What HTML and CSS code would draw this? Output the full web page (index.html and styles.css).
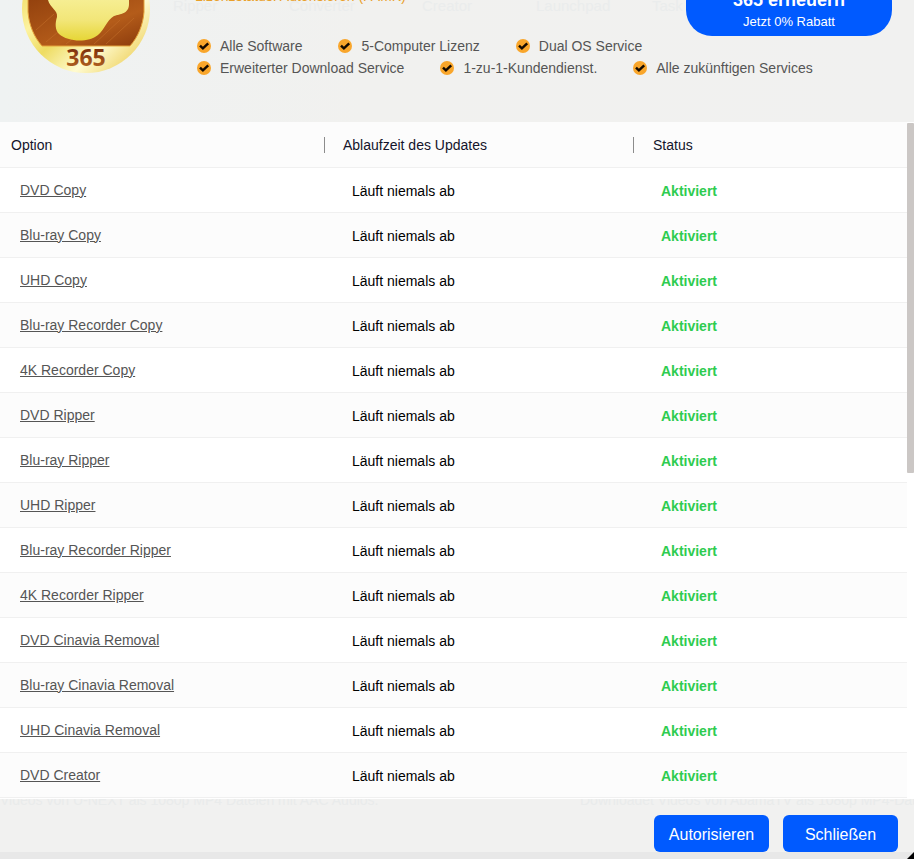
FILE: index.html
```html
<!DOCTYPE html>
<html lang="de">
<head>
  <meta charset="UTF-8">
  <title>Lizenzstatus</title>
  <link rel="stylesheet" href="styles.css">
</head>
<body>

<svg class="sprite" width="0" height="0" aria-hidden="true">
  <symbol id="check" viewBox="0 0 14 14">
    <circle cx="7" cy="7" r="7" fill="#f9a62b"/>
    <path d="M3 6.6 5.9 9.3 11.2 4.4" fill="none" stroke="#140a00" stroke-width="2.5"/>
  </symbol>
</svg>

<header class="license">
  <div class="ghost-nav" aria-hidden="true">
    <span class="g1">Ripper</span>
    <span class="g2">Converter</span>
    <span class="g3">Creator</span>
    <span class="g4">Launchpad</span>
    <span class="g5">Task</span>
  </div>

  <svg class="medal" viewBox="0 0 128 74" role="img" aria-label="365">
    <defs>
      <linearGradient id="rim" x1="0" y1="0" x2="1" y2="1">
        <stop offset="0" stop-color="#e3c62f"/>
        <stop offset=".35" stop-color="#fdf3a0"/>
        <stop offset=".5" stop-color="#eedc62"/>
        <stop offset=".7" stop-color="#fffbd0"/>
        <stop offset="1" stop-color="#e6bf2e"/>
      </linearGradient>
      <linearGradient id="brown" x1="0" y1="0" x2="1" y2="1">
        <stop offset="0" stop-color="#94420e"/>
        <stop offset=".6" stop-color="#b45c1a"/>
        <stop offset="1" stop-color="#8a3a0c"/>
      </linearGradient>
      <linearGradient id="gold" x1="0" y1="0" x2="0" y2="1">
        <stop offset="0" stop-color="#f6ee92"/>
        <stop offset=".5" stop-color="#f2e678"/>
        <stop offset="1" stop-color="#e6d636"/>
      </linearGradient>
      <linearGradient id="digits" x1="0" y1="0" x2="0" y2="1">
        <stop offset="0.2" stop-color="#7a2c0a"/>
        <stop offset="1" stop-color="#c07026"/>
      </linearGradient>
    </defs>
    <circle cx="64" cy="9" r="64" fill="url(#rim)"/>
    <path d="M6 0V12C7 25 12 37 20 46H108C116 37 121 25 122 12V0Z" fill="url(#brown)"/>
    <path d="M6 0V12C7 25 12 37 20 46H108C116 37 121 25 122 12V0" fill="none" stroke="#e5a33a" stroke-width="1"/>
    <path d="M44 44 60 31M72 44 98 20M84 44 112 18M14 30 32 14M24 42 36 32" stroke="#c46f2a" stroke-width="1" opacity=".6"/>
    <path d="M26 0C28 8 36 10 35 17C33 23 33 30 37 34C46 42 66 43 76 35C83 29 84 21 92 16C98 14 107 14 107 4V0Z" fill="url(#gold)"/>
    <text class="medal-text" x="64" y="66" fill="url(#digits)">365</text>
  </svg>

  <div class="details">
    <p class="state">Lizenzstatus: Autorisieren (FAMK)</p>
    <ul class="features">
      <li><svg class="check"><use href="#check"/></svg>Alle Software</li>
      <li><svg class="check"><use href="#check"/></svg>5-Computer Lizenz</li>
      <li><svg class="check"><use href="#check"/></svg>Dual OS Service</li>
    </ul>
    <ul class="features">
      <li><svg class="check"><use href="#check"/></svg>Erweiterter Download Service</li>
      <li><svg class="check"><use href="#check"/></svg>1-zu-1-Kundendienst.</li>
      <li><svg class="check"><use href="#check"/></svg>Alle zukünftigen Services</li>
    </ul>
  </div>

  <button class="renew" type="button"><strong>365 erneuern</strong><span>Jetzt 0% Rabatt</span></button>
</header>

<main class="list">
  <table class="options">
    <thead>
      <tr><th>Option</th><th>Ablaufzeit des Updates</th><th>Status</th></tr>
    </thead>
    <tbody>
      <tr><td><a href="#">DVD Copy</a></td><td>Läuft niemals ab</td><td class="active">Aktiviert</td></tr>
      <tr><td><a href="#">Blu-ray Copy</a></td><td>Läuft niemals ab</td><td class="active">Aktiviert</td></tr>
      <tr><td><a href="#">UHD Copy</a></td><td>Läuft niemals ab</td><td class="active">Aktiviert</td></tr>
      <tr><td><a href="#">Blu-ray Recorder Copy</a></td><td>Läuft niemals ab</td><td class="active">Aktiviert</td></tr>
      <tr><td><a href="#">4K Recorder Copy</a></td><td>Läuft niemals ab</td><td class="active">Aktiviert</td></tr>
      <tr><td><a href="#">DVD Ripper</a></td><td>Läuft niemals ab</td><td class="active">Aktiviert</td></tr>
      <tr><td><a href="#">Blu-ray Ripper</a></td><td>Läuft niemals ab</td><td class="active">Aktiviert</td></tr>
      <tr><td><a href="#">UHD Ripper</a></td><td>Läuft niemals ab</td><td class="active">Aktiviert</td></tr>
      <tr><td><a href="#">Blu-ray Recorder Ripper</a></td><td>Läuft niemals ab</td><td class="active">Aktiviert</td></tr>
      <tr><td><a href="#">4K Recorder Ripper</a></td><td>Läuft niemals ab</td><td class="active">Aktiviert</td></tr>
      <tr><td><a href="#">DVD Cinavia Removal</a></td><td>Läuft niemals ab</td><td class="active">Aktiviert</td></tr>
      <tr><td><a href="#">Blu-ray Cinavia Removal</a></td><td>Läuft niemals ab</td><td class="active">Aktiviert</td></tr>
      <tr><td><a href="#">UHD Cinavia Removal</a></td><td>Läuft niemals ab</td><td class="active">Aktiviert</td></tr>
      <tr><td><a href="#">DVD Creator</a></td><td>Läuft niemals ab</td><td class="active">Aktiviert</td></tr>
    </tbody>
  </table>
  <div class="thumb"></div>
</main>

<footer class="actions">
  <div class="ghost-text" aria-hidden="true">
    <span>Videos von U-NEXT als 1080p MP4 Dateien mit AAC Audios.</span>
    <span>Downloadet Videos von AbamaTV als 1080p MP4-Dateien</span>
  </div>
  <button type="button">Autorisieren</button>
  <button type="button">Schließen</button>
  <span class="corner"></span>
</footer>

</body>
</html>
```
FILE: styles.css
```css
* {
  box-sizing: border-box;
}

body {
  margin: 0;
  min-height: 100vh;
  display: flex;
  flex-direction: column;
  background: #f1f2f1;
  color: #000;
  font: 14px/20px "Liberation Sans", Arial, sans-serif;
}

.sprite {
  position: absolute;
}

/* license header, scrolled partly out of view */
.license {
  position: relative;
  display: flex;
  height: 122px;
  padding: 0 22px;
  overflow: hidden;
  background: linear-gradient(90deg, #eff2f2, #f1f1ef 40%, #f1f1f0);
}

.medal {
  flex: none;
  width: 128px;
  height: 74px;
}

.medal-text {
  font: bold 23px "Open Sans", sans-serif;
  text-anchor: middle;
}

.details {
  flex: 1;
  margin-top: -14px;
  padding-left: 45px;
  color: #555;
  white-space: nowrap;
}

.state {
  margin: 0 0 29px;
  color: #e9a02a;
}

.features {
  display: flex;
  gap: 36px;
  margin: 0;
  padding: 0 0 0 2px;
  list-style: none;
  line-height: 22px;
}

.features li {
  display: flex;
  align-items: center;
  gap: 9px;
}

.check {
  width: 14px;
  height: 14px;
}

.renew {
  position: absolute;
  top: -24px;
  right: 22px;
  width: 206px;
  height: 60px;
  padding: 8px 0 0;
  border: none;
  border-radius: 26px;
  background: #005aff;
  color: #fff;
  font: 13px/20px "Liberation Sans", Arial, sans-serif;
  cursor: pointer;
}

.renew strong {
  display: block;
  font-size: 18px;
  line-height: 24px;
}

/* page behind the dialog, barely showing through */
.ghost-nav span {
  position: absolute;
  top: -4px;
  color: #eaecec;
  font-size: 15px;
}

.ghost-nav .g1 { left: 173px; }
.ghost-nav .g2 { left: 289px; }
.ghost-nav .g3 { left: 422px; }
.ghost-nav .g4 { left: 536px; }
.ghost-nav .g5 { left: 652px; }

.list {
  position: relative;
  flex: 1;
  padding-right: 7px;
  background: #fff;
}

.options {
  width: 100%;
  border-collapse: collapse;
  table-layout: fixed;
}

.options th,
.options td {
  height: 45px;
  padding: 2px 0 0 28px;
  border-bottom: 1px solid #f0f0f0;
  text-align: left;
}

.options th {
  padding: 1px 0 0 19px;
  color: #14142b;
  font-weight: normal;
}

.options th:first-child {
  width: 324px;
  padding-left: 11px;
}

.options th:nth-child(2) {
  width: 309px;
}

.options th:last-child {
  padding-left: 20px;
}

.options th + th {
  background: linear-gradient(#8c8c8c, #8c8c8c) 0 15px / 1px 16px no-repeat;
}

.options td:first-child {
  padding: 0 0 0 20px;
}

.options thead tr,
.options tbody tr:nth-child(even) {
  background: #fcfcfc;
}

.options a {
  color: #555;
}

.options .active {
  color: #2ecc50;
  font-weight: bold;
}

.thumb {
  position: absolute;
  top: 1px;
  right: 0;
  width: 7px;
  height: 350px;
  border-radius: 1px;
  background: #cbc7c5;
}

.actions {
  position: relative;
  display: flex;
  justify-content: flex-end;
  gap: 14px;
  height: 60px;
  padding: 16px 16px 0;
  overflow: hidden;
  background: linear-gradient(#f1f1f0 53px, #e8e8e8 53px);
}

.actions button {
  z-index: 1;
  width: 115px;
  height: 37px;
  padding: 2px 0 0;
  border: none;
  border-radius: 6px;
  background: #005aff;
  color: #fff;
  font: 16px "Liberation Sans", Arial, sans-serif;
  cursor: pointer;
}

.ghost-text span {
  position: absolute;
  top: -9px;
  left: 0;
  color: #e9ebeb;
  white-space: nowrap;
}

.ghost-text span + span {
  left: 580px;
}

.corner {
  position: absolute;
  right: 0;
  bottom: 0;
  border-bottom: 7px solid #000;
  border-left: 7px solid transparent;
}
```
